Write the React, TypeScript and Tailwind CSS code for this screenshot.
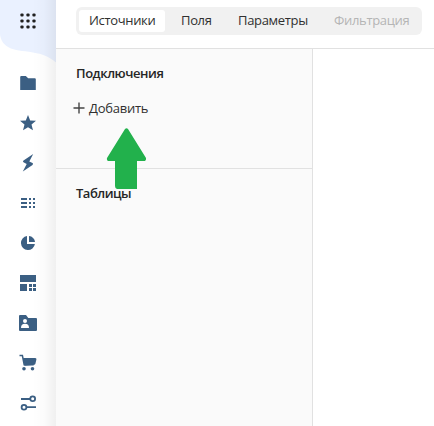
import type { ReactNode } from 'react';

const Icon = ({ children }: { children: ReactNode }) => (
  <button className="flex h-10 w-14 items-center justify-center text-[#3b5f83]">
    <svg width="20" height="20" viewBox="0 0 20 20" fill="currentColor">{children}</svg>
  </button>
);

const Sidebar = () => (
  <aside className="relative h-[426px] w-14 shrink-0 overflow-hidden bg-white">
    <svg className="absolute left-0 top-0" width="56" height="64" viewBox="0 0 56 64">
      <path d="M0 0H56V62.5C48 56 43 54 33 52.4C22 50.7 15 50.8 8.5 47.3C3 44.2 0 39 0 33Z" fill="#eaf1ff" />
    </svg>
    <div className="absolute inset-y-0 right-0 w-6 bg-linear-to-r from-black/0 via-black/[0.015] to-black/[0.06]" />
    <nav className="relative flex flex-col">
      <div className="flex h-[63px] justify-center pt-[11px]">
        <svg width="20" height="20" viewBox="0 0 20 20" fill="#202020">
          {[4, 10, 16].map((y) => [4, 10, 16].map((x) => (
            <rect key={`${x}-${y}`} x={x - 1.6} y={y - 1.6} width="3.2" height="3.2" rx="1.1" />
          )))}
        </svg>
      </div>
      <Icon><path d="M3.2 3H7.8L10.2 5.2H16.8Q17.8 5.2 17.8 6.2V17H2.2V4Q2.2 3 3.2 3Z" /></Icon>
      <Icon><path d="M10 2L12.2 7.4L18 7.8L13.5 11.6L15 17.3L10 14.2L5 17.3L6.5 11.6L2 7.8L7.8 7.4Z" /></Icon>
      <Icon><path d="M15.2 1.1L5.5 7.5Q4.3 8.5 5.5 9.3L8.7 10.9L4.8 18.4L14.5 11.9Q15.6 10.8 14.5 10L11.3 8.5Z" /></Icon>
      <Icon>
        <path d="M3 5h6v2H3ZM3 9h6v2H3ZM3 13h6v2H3ZM11 5h2v2h-2ZM15 5h2v2h-2ZM11 9h2v2h-2ZM15 9h2v2h-2ZM11 13h2v2h-2ZM15 13h2v2h-2Z" />
      </Icon>
      <Icon>
        <path d="M9 3.1V11H16.9A7 7 0 1 1 9 3.1Z" />
        <path d="M11 3.1A6.4 6.4 0 0 1 17 9H11Z" />
      </Icon>
      <Icon>
        <path d="M2 2H18V9H2ZM2 11H9V18H2ZM11 11h3v3h-3ZM15 11h3v3h-3ZM11 15h3v3h-3ZM15 15h3v3h-3Z" />
      </Icon>
      <Icon>
        <path d="M2 2H8L10.3 5H18Q19 5 19 6V17Q19 18 18 18H2Q1 18 1 17V3Q1 2 2 2Z" />
        <circle cx="7" cy="8" r="2" fill="white" />
        <path d="M3 15Q3 10.8 7 10.8T11 15Z" fill="white" />
      </Icon>
      <Icon>
        <path d="M1.5 2.6H4.4L6.2 11.7H15.7" fill="none" stroke="currentColor" strokeWidth="1.5" />
        <path d="M5 5H17.2Q18.8 5 18.4 6.5L17.4 10.8Q17.2 11.7 16.2 11.8L6.5 12.7Z" />
        <circle cx="6" cy="15.8" r="1.8" />
        <circle cx="14.5" cy="15.8" r="1.8" />
      </Icon>
      <Icon>
        <path d="M3 6H12.2M8.5 14.2H18" stroke="currentColor" strokeWidth="1.8" />
        <circle cx="14.7" cy="5.7" r="2.4" fill="none" stroke="currentColor" strokeWidth="1.8" />
        <circle cx="6" cy="14.3" r="2.4" fill="none" stroke="currentColor" strokeWidth="1.8" />
      </Icon>
    </nav>
  </aside>
);

export default function App() {
  return (
    <div className="flex h-[426px] w-[434px] overflow-hidden bg-white font-['Open_Sans','Noto_Sans',sans-serif] text-[13px] tracking-[-0.33px] text-[#303030]">
      <Sidebar />
      <main className="flex min-w-0 flex-1 flex-col">
        <header className="h-[49px] shrink-0 border-b border-[#e1e1e1] pl-5 pt-[7px]">
          <div className="flex h-7 w-[346px] items-center rounded-md bg-[#f1f1f1] p-[3px] whitespace-nowrap">
            <button className="h-[22px] w-[86px] rounded-[3px] bg-white pb-0.5 pl-[10px] text-left leading-5">Источники</button>
            <button className="ml-4 w-[31px] text-left">Поля</button>
            <button className="ml-[26px] w-[70px] text-left">Параметры</button>
            <button className="ml-[26px] w-[75px] text-left text-[#b5b5b5]">Фильтрация</button>
          </div>
        </header>
        <div className="flex min-h-0 flex-1">
          <div className="flex w-[257px] flex-col border-r border-[#e1e1e1] bg-[#fafafa]">
            <section className="relative h-[120px] shrink-0 border-b border-[#e1e1e1] pl-5 pt-[14px]">
              <h2 className="text-[13px] leading-5 font-semibold tracking-[-0.45px] text-[#262626]">Подключения</h2>
              <button className="-ml-[3px] mt-[15px] flex h-5 items-center gap-1 leading-5 tracking-[-0.25px]">
                <svg width="12" height="12" viewBox="0 0 12 12"><path d="M6 .5V11.5M.5 6H11.5" stroke="#444" strokeWidth="1.4" /></svg>
                Добавить
              </button>
              <svg className="absolute left-[50px] top-[79px] z-10" width="42" height="62" viewBox="0 0 42 62">
                <path d="M19 1Q20.5-.7 22 1L40 30Q40.3 32 39 33H31V61H11Q9 60.5 9 58V33H2Q.5 32 1 30Z" fill="#22b14c" />
              </svg>
            </section>
            <section className="pl-5 pt-[14px]">
              <h2 className="text-[13px] leading-5 font-semibold tracking-[-0.5px] text-[#262626]">Таблицы</h2>
            </section>
          </div>
        </div>
      </main>
    </div>
  );
}
